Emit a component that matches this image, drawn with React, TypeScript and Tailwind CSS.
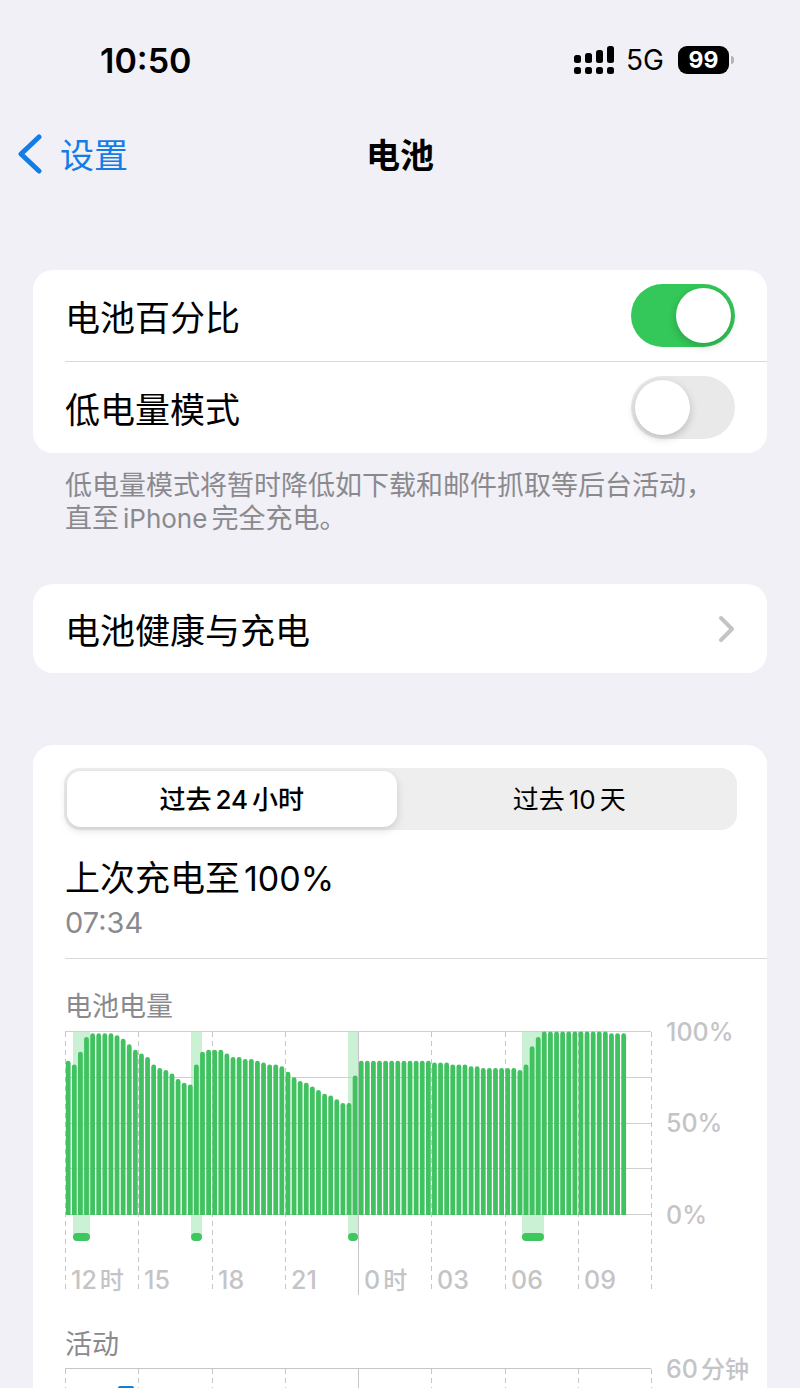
import { useState } from "react";

const batteryLevels = [
  84, 82, 89, 97, 99, 99, 99, 99, 98, 96, 93, 90, 88, 86, 82, 80, 79, 77, 74, 72,
  71, 82, 89, 90, 90, 90, 88, 86, 86, 85, 85, 84, 83, 82, 82, 81, 78, 75, 73, 72,
  70, 68, 66, 65, 63, 61, 61, 76, 84, 84, 84, 84, 84, 84, 84, 84, 84, 84, 84, 84,
  83, 83, 83, 82, 82, 82, 81, 81, 80, 80, 80, 80, 80, 80, 79, 82, 92, 97, 100,
  100, 100, 100, 100, 100, 100, 100, 100, 100, 100, 99, 99, 99,
];

const chargingPeriods = [
  { start: 8, width: 17 },
  { start: 126, width: 11 },
  { start: 283, width: 10 },
  { start: 457, width: 22 },
];

const hours = ["12", "15", "18", "21", "0", "03", "06", "09", ""];

const plotWidth = 586;
const plotHeight = 183;
const hourStep = plotWidth / 8;
const barStep = plotWidth / 96;

const HourLines = ({ bottom }: { bottom: number }) => (
  <g stroke="#c6c6c8">
    {hours.map((hour, index) => {
      const x = Math.round(index * hourStep) + 0.5;
      const midnight = hour === "0";
      return (
        <line
          key={index}
          x1={x}
          x2={x}
          y1={1}
          y2={midnight ? bottom + 3 : bottom}
          strokeDasharray={midnight ? undefined : "5 4"}
        />
      );
    })}
  </g>
);

const BatteryChart = () => (
  <svg
    viewBox="0 0 702 282"
    className="block w-full"
    role="img"
    aria-label="电池电量"
  >
    <g transform="translate(0 16)">
      {chargingPeriods.map(({ start, width }) => (
        <rect key={start} x={start} y={0} width={width} height={206} fill="#cbf1d4" />
      ))}
      <g stroke="#cfcfd1">
        {[0, 0.25, 0.5, 0.75, 1].map((part) => {
          const y = Math.round(part * plotHeight) + 0.5;
          return <line key={part} x1={0} x2={plotWidth} y1={y} y2={y} />;
        })}
      </g>
      <HourLines bottom={261} />
      {batteryLevels.map((level, index) => {
        const x = index * barStep + 0.8;
        const top = plotHeight * (1 - level / 100) + 0.5;
        return (
          <path
            key={index}
            d={`M${x} ${plotHeight + 1}V${top + 2.4}a2.4 2.4 0 0 1 4.8 0V${plotHeight + 1}z`}
            fill="#40c260"
          />
        );
      })}
      {chargingPeriods.map(({ start, width }) => (
        <rect key={start} x={start} y={202} width={width} height={8} rx={4} fill="#3fc75f" />
      ))}
      <g fill="#c4c4c6" fontSize="25" fontWeight="500">
        {hours.map((hour, index) => (
          <text key={index} x={Math.round(index * hourStep) + 6} y={258}>
            {hour}
            {index % 4 === 0 && hour && <tspan dx="3" fontSize="24">时</tspan>}
          </text>
        ))}
        <text x={601} y={10}>100%</text>
        <text x={601} y={101}>50%</text>
        <text x={601} y={193}>0%</text>
      </g>
    </g>
  </svg>
);

const ActivityChart = () => (
  <svg
    viewBox="0 0 702 282"
    className="block w-full"
    role="img"
    aria-label="活动"
  >
    <g transform="translate(0 16)">
      <line x1={0} x2={plotWidth} y1={0.5} y2={0.5} stroke="#c6c6c8" />
      <HourLines bottom={261} />
      <rect x={53} y={18} width={16} height={165} rx={2} fill="#0f7fd8" />
      <text x={601} y={10} fill="#c4c4c6" fontSize="25" fontWeight="500">
        60<tspan dx="3" fontSize="24">分钟</tspan>
      </text>
    </g>
  </svg>
);

const Toggle = ({ id, defaultChecked }: { id: string; defaultChecked: boolean }) => (
  <input
    id={id}
    type="checkbox"
    role="switch"
    defaultChecked={defaultChecked}
    className="h-[63px] w-[104px] shrink-0 appearance-none rounded-full bg-[#e9e9ea] p-1 before:block before:size-[55px] before:rounded-full before:bg-white before:shadow-[0_3px_8px_rgba(0,0,0,0.2)] checked:bg-[#34c759] checked:before:ml-[41px]"
  />
);

const StatusBar = () => (
  <div className="flex h-[120px] items-center justify-between pr-[66px] pl-[100px]">
    <span className="text-[34px] font-semibold">10:50</span>
    <div className="flex items-center">
      <svg width="40" height="28" viewBox="0 0 40 28" aria-hidden="true">
        <rect x="0" y="9" width="7" height="8" rx="2.5" />
        <rect x="11" y="7" width="7" height="10" rx="2.5" />
        <rect x="22" y="4" width="7" height="13" rx="2.5" />
        <rect x="33" y="0" width="7" height="17" rx="2.5" />
        <rect x="0" y="21" width="7" height="7" rx="2.5" />
        <rect x="11" y="21" width="7" height="7" rx="2.5" />
        <rect x="22" y="21" width="7" height="7" rx="2.5" />
        <rect x="33" y="21" width="7" height="7" rx="2.5" />
      </svg>
      <span className="ml-3 text-[28px]">5G</span>
      <span className="ml-[14px] flex h-7 w-[51px] items-center justify-center rounded-[9px] bg-black text-[23px] font-bold text-white">
        99
      </span>
      <span className="ml-0.5 h-2 w-[3px] rounded-r-full bg-[#b5b5b9]" />
    </div>
  </div>
);

const App = () => {
  const [range, setRange] = useState("day");
  const tab = "flex-1 rounded-[14px] text-[26px]";
  const activeTab = "bg-white font-medium shadow-[0_3px_8px_rgba(0,0,0,0.15)]";

  return (
    <div className="h-screen overflow-hidden bg-[#f1f0f6] font-['Inter','Noto_Sans_CJK_SC',sans-serif] text-black">
      <StatusBar />
      <header className="grid h-[68px] grid-cols-3 items-center px-[18px] text-[34px]">
        <a href="#settings" className="flex items-center gap-[18px] text-[#147ce5]">
          <svg width="24" height="40" viewBox="0 0 24 40" fill="none" aria-hidden="true">
            <path
              d="M21 3 3 20l18 17"
              stroke="currentColor"
              strokeWidth="5"
              strokeLinecap="round"
              strokeLinejoin="round"
            />
          </svg>
          <span className="pt-0.5">设置</span>
        </a>
        <h1 className="pt-0.5 text-center font-bold">电池</h1>
      </header>

      <main className="px-[33px] pt-[82px]">
        <section className="rounded-[20px] bg-white pl-8 text-[35px]">
          <div className="flex h-[92px] items-center justify-between border-b border-[#d9d9dc] pr-8">
            <label htmlFor="percentage" className="pt-1.5">电池百分比</label>
            <Toggle id="percentage" defaultChecked={true} />
          </div>
          <div className="flex h-[91px] items-center justify-between pr-8">
            <label htmlFor="low-power" className="pt-1.5">低电量模式</label>
            <Toggle id="low-power" defaultChecked={false} />
          </div>
        </section>
        <p className="px-8 pt-4 text-[27px] leading-[33px] text-[#8a8a8e]">
          低电量模式将暂时降低如下载和邮件抓取等后台活动，
          <br />
          直至<span className="mx-1 text-[26px]">iPhone</span>完全充电。
        </p>

        <button className="mt-[49px] flex h-[89px] w-full items-center justify-between rounded-[20px] bg-white px-8 text-[35px]">
          <span className="pt-1.5">电池健康与充电</span>
          <svg width="17" height="28" viewBox="0 0 17 28" fill="none" aria-hidden="true">
            <path
              d="m3 3 11 11L3 25"
              stroke="#c4c4c6"
              strokeWidth="4"
              strokeLinecap="round"
              strokeLinejoin="round"
            />
          </svg>
        </button>

        <section className="mt-[72px] rounded-[20px] bg-white pt-[23px] pl-8">
          <div className="mr-[30px] -ml-px flex h-[62px] gap-2 rounded-[16px] bg-[#eeeeef] p-[3px]">
            <button
              aria-pressed={range === "day"}
              onClick={() => setRange("day")}
              className={`${tab} ${range === "day" ? activeTab : ""}`}
            >
              过去<span className="mx-1">24</span>小时
            </button>
            <button
              aria-pressed={range === "days"}
              onClick={() => setRange("days")}
              className={`${tab} ${range === "days" ? activeTab : ""}`}
            >
              过去<span className="mx-1">10</span>天
            </button>
          </div>
          <div className="border-b border-[#d9d9dc] pt-6 pb-[15px]">
            <h2 className="text-[35px] leading-[48px]">
              上次充电至<span className="ml-1 text-[34px]">100%</span>
            </h2>
            <p className="text-[29px] leading-[40px] text-[#8a8a8e]">07:34</p>
          </div>
          <h3 className="pt-7 text-[27px] leading-[40px] text-[#8a8a8e]">电池电量</h3>
          <div className="-mt-3">
            <BatteryChart />
          </div>
          <h3 className="pt-7 text-[27px] leading-[40px] text-[#8a8a8e]">活动</h3>
          <div className="-mt-[13px]">
            <ActivityChart />
          </div>
        </section>
      </main>
    </div>
  );
};

export default App;
